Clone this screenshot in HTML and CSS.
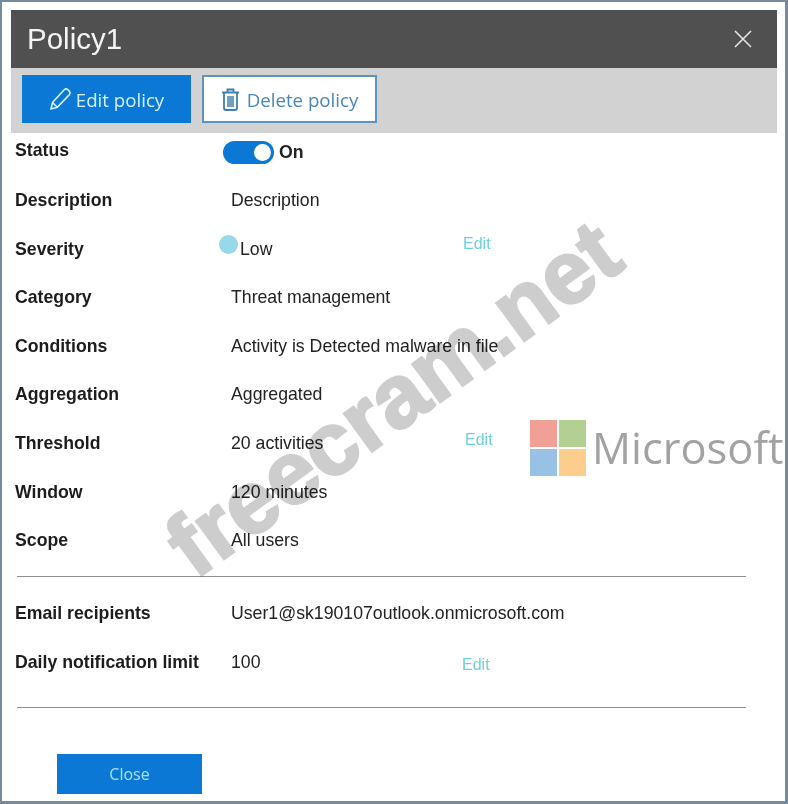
FILE: index.html
```html
<!DOCTYPE html>
<html lang="en">
<head>
    <meta charset="UTF-8">
    <title>Policy1</title>
    <link rel="stylesheet" href="styles.css">
</head>
<body>
    <div class="frame">
        <div class="header">
            <h1>Policy1</h1>
            <svg class="close-icon" width="18" height="18" viewBox="0 0 18 18">
                <path d="M1 1 L17 17 M17 1 L1 17" />
            </svg>
        </div>

        <div class="toolbar">
            <button class="btn btn-edit">
                <svg width="23" height="24" viewBox="0 0 23 24">
                    <path d="M2 22 L3.5 15.5 L15.5 2.5 Q17 1.2 18.8 2.7 L20.5 4.3 Q21.8 6 20.4 7.6 L8.3 20.3 Z M3.5 15.5 L8.3 20.3" />
                </svg>
                Edit policy
            </button>
            <button class="btn btn-delete">
                <svg width="19" height="23" viewBox="0 0 19 23">
                    <path class="trash-line" d="M1 4.5 H18 M6.5 4 V1.5 H12.5 V4 M3 5 V20 Q3 22 5 22 H14 Q16 22 16 20 V5" />
                    <rect x="6" y="8" width="7" height="11" />
                </svg>
                Delete policy
            </button>
        </div>

        <div class="rows">
            <div class="row row-status">
                <div class="label">Status</div>
                <div class="value value-status"><span class="toggle"><span class="knob"></span></span>On</div>
            </div>
            <div class="row">
                <div class="label">Description</div>
                <div class="value">Description</div>
            </div>
            <div class="row">
                <div class="label">Severity</div>
                <div class="value value-severity"><span class="dot"></span>Low</div>
                <a class="edit-link edit-severity">Edit</a>
            </div>
            <div class="row">
                <div class="label">Category</div>
                <div class="value">Threat management</div>
            </div>
            <div class="row">
                <div class="label">Conditions</div>
                <div class="value">Activity is Detected malware in file</div>
            </div>
            <div class="row">
                <div class="label">Aggregation</div>
                <div class="value">Aggregated</div>
            </div>
            <div class="row">
                <div class="label">Threshold</div>
                <div class="value">20 activities</div>
                <a class="edit-link edit-threshold">Edit</a>
            </div>
            <div class="row">
                <div class="label">Window</div>
                <div class="value">120 minutes</div>
            </div>
            <div class="row">
                <div class="label">Scope</div>
                <div class="value">All users</div>
            </div>
        </div>

        <div class="divider divider-first"></div>

        <div class="rows">
            <div class="row">
                <div class="label">Email recipients</div>
                <div class="value">User1@sk190107outlook.onmicrosoft.com</div>
            </div>
            <div class="row">
                <div class="label">Daily notification limit</div>
                <div class="value">100</div>
                <a class="edit-link edit-limit">Edit</a>
            </div>
        </div>

        <div class="divider divider-second"></div>

        <button class="btn-close">Close</button>

        <!-- stamped over the screenshot -->
        <div class="watermark">freecram.net</div>
        <div class="ms-logo">
            <div class="ms-squares">
                <span class="sq-red"></span>
                <span class="sq-green"></span>
                <span class="sq-blue"></span>
                <span class="sq-yellow"></span>
            </div>
            <span class="ms-name">Microsoft</span>
        </div>
    </div>
</body>
</html>
```

FILE: styles.css
```css
* {
    margin: 0;
    padding: 0;
    box-sizing: border-box;
}

body {
    font-family: 'Liberation Sans', Arial, sans-serif;
    background: white;
}

.frame {
    position: relative;
    width: 788px;
    height: 804px;
    overflow: hidden;
    background: white;
    border: solid #768a9e;
    border-width: 2px 3px 3px 2px;
    filter: blur(0.4px);
}

.header {
    display: flex;
    align-items: center;
    justify-content: space-between;
    height: 58px;
    margin: 8px 8px 0 9px;
    padding: 0 25px 0 16px;
    background: #505050;
    color: #f4f4f4;
}

.header h1 {
    font-size: 29.5px;
    font-weight: 400;
}

.close-icon path {
    fill: none;
    stroke: #e4e4e4;
    stroke-width: 1.6;
}

.toolbar {
    display: flex;
    gap: 11px;
    height: 65px;
    margin: 0 8px 0 9px;
    padding: 7px 11px 0;
    background: #d2d2d2;
}

.btn {
    display: flex;
    align-items: center;
    justify-content: center;
    gap: 4px;
    height: 48px;
    font-family: 'Open Sans', sans-serif;
    font-size: 18.7px;
    cursor: pointer;
}

.btn-edit {
    width: 169px;
    background: #0a78d4;
    color: #d4f1fb;
    border: none;
}

.btn-edit svg path {
    fill: none;
    stroke: #d4f1fb;
    stroke-width: 1.6;
}

.btn-delete {
    width: 175px;
    gap: 7px;
    background: white;
    color: #4a86b8;
    border: 2px solid #5c94bf;
}

.btn-delete .trash-line {
    fill: none;
    stroke: #3f7fae;
    stroke-width: 1.8;
}

.btn-delete rect {
    fill: #3f7fae;
    opacity: 0.75;
}

.row {
    display: grid;
    grid-template-columns: 216px 233px auto;
    align-items: center;
    height: 48.6px;
    padding-left: 13px;
    font-size: 17.7px;
    color: #222;
}

.row-status {
    height: 43.2px;
    padding-bottom: 9.2px;
}

.label {
    font-weight: 700;
    color: #1c1c1c;
}

.value {
    white-space: nowrap;
}

.value-status {
    display: flex;
    align-items: center;
    gap: 5px;
    margin-left: -8px;
    font-weight: 700;
    padding-top: 4px;
}

.toggle {
    display: flex;
    align-items: center;
    justify-content: flex-end;
    width: 51px;
    height: 23px;
    padding-right: 3px;
    border-radius: 12px;
    background: #0a78d4;
}

.knob {
    width: 17px;
    height: 17px;
    border-radius: 50%;
    background: white;
}

.value-severity {
    display: flex;
    align-items: center;
}

.dot {
    width: 19px;
    height: 19px;
    margin: -10px 2px 0 -12px;
    border-radius: 50%;
    background: #99d8ea;
}

.edit-link {
    font-size: 16px;
    color: #6fd0dc;
}

.edit-severity {
    margin-left: -1px;
    padding-bottom: 11px;
}

.edit-threshold {
    margin-left: 1px;
    padding-bottom: 7px;
}

.edit-limit {
    margin-left: -2px;
    padding-top: 5px;
}

.divider {
    width: 729px;
    height: 1px;
    margin-left: 15px;
    background: #8f8f8f;
}

.divider-first {
    margin-top: 10.7px;
    margin-bottom: 12.7px;
}

.divider-second {
    margin-top: 20px;
}

.btn-close {
    display: block;
    width: 145px;
    height: 40px;
    margin: 46px 0 0 55px;
    background: #0a78d4;
    color: #a9e2f5;
    border: none;
    font-family: 'Open Sans', sans-serif;
    font-size: 16px;
}

.watermark {
    position: absolute;
    left: 124px;
    top: 352px;
    font-size: 89px;
    font-weight: 700;
    line-height: 1;
    white-space: nowrap;
    color: #cdcdcd;
    -webkit-text-stroke: 2.5px #cdcdcd;
    mix-blend-mode: multiply;
    transform: rotate(-36deg);
}

.ms-logo {
    position: absolute;
    left: 528px;
    top: 416px;
    display: flex;
    align-items: center;
    gap: 6px;
}

.ms-squares {
    display: grid;
    grid-template-columns: 27px 27px;
    grid-template-rows: 27px 27px;
    gap: 2px;
}

.sq-red { background: #f0a094; }
.sq-green { background: #b3cf92; }
.sq-blue { background: #98c1e6; }
.sq-yellow { background: #fdcd8d; }

.ms-name {
    font-family: 'Open Sans', sans-serif;
    font-size: 43.4px;
    font-weight: 400;
    color: #a2a2a2;
}
```
